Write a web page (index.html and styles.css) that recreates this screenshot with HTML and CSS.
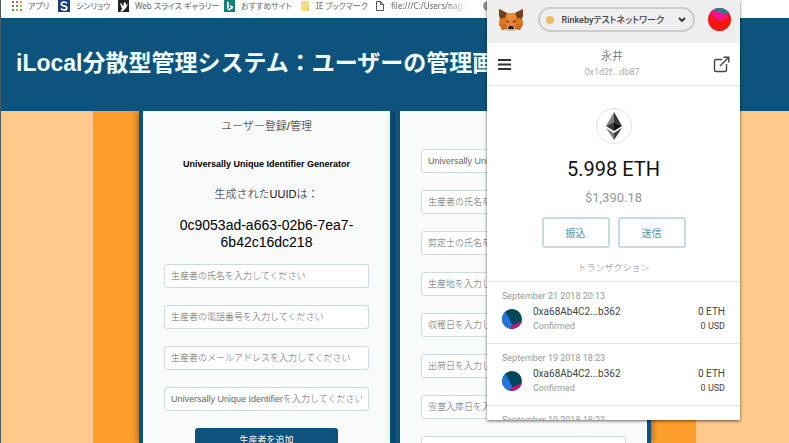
FILE: index.html
```html
<!DOCTYPE html>
<html lang="ja">
<head>
    <meta charset="UTF-8">
    <meta name="viewport" content="width=device-width, initial-scale=1.0">
    <title>iLocal分散型管理システム</title>
    <link rel="stylesheet" href="styles.css">
</head>
<body>

    <nav class="bookmarks">
        <a href="#">
            <svg width="10" height="10" viewBox="0 0 10 10"><path fill="#d9534f" d="M0 0h2v2H0zM4 0h2v2H4zM0 4h2v2H0z"/><path fill="#e0a030" d="M8 0h2v2H8zM8 4h2v2H8zM4 8h2v2H4z"/><path fill="#4a9a5a" d="M4 4h2v2H4zM0 8h2v2H0z"/><path fill="#c76a3a" d="M8 8h2v2H8z"/></svg>
            アプリ
        </a>
        <a href="#">
            <svg width="12" height="12" viewBox="0 0 12 12"><rect width="12" height="12" fill="#1c3f7c"/><path d="M9 3.2Q8 2 6 2 3.4 2 3.4 3.9 3.4 5.4 6 5.9 8.8 6.4 8.8 8 8.8 10 6 10 4 10 3 8.6" fill="none" stroke="#fff" stroke-width="1.7"/></svg>
            シンリョウ
        </a>
        <a href="#">
            <svg width="11" height="12" viewBox="0 0 11 12"><rect width="11" height="12" fill="#222"/><path d="M2 3l2 1 1 3 1-5 2 1v2l2-1-2 4-3 3-3 1 2-3z" fill="#fff"/></svg>
            Web スライス ギャラリー
        </a>
        <a href="#">
            <svg width="11" height="12" viewBox="0 0 11 12"><rect width="11" height="12" fill="#138276"/><path d="M3 1.5l1.7.6v5.7L3 9.3zM3 9.3l2 1.3L9 8.2V6.3L5.4 5l.8 1.7 1 .5-2.5 1.5z" fill="#fff"/></svg>
            おすすめサイト
        </a>
        <a href="#">
            <svg width="10" height="12" viewBox="0 0 10 12"><path d="M1 1h7l1 1v9H1z" fill="#f7dc83"/><path d="M7 7h2v4H7z" fill="#efca62"/></svg>
            IE ブックマーク
        </a>
        <a href="#">
            <svg width="10" height="12" viewBox="0 0 10 12"><path d="M1.5 1.5h4l3 3v6h-7zM5.5 1.5v3h3" fill="none" stroke="#555"/></svg>
            <span class="fade">file:///C:/Users/naga</span>
        </a>
        <a href="#"><svg width="10" height="12" viewBox="0 0 10 12"><circle cx="5" cy="6" r="5" fill="#9a9488"/></svg></a>
    </nav>

    <header class="site-header">
        <h1>iLocal分散型管理システム：ユーザーの管理画面</h1>
    </header>

    <main class="container">
        <section class="panel">
            <h2>ユーザー登録/管理</h2>
            <h3>Universally Unique Identifier Generator</h3>
            <p class="uuid-label">生成されたUUIDは：</p>
            <p class="uuid">0c9053ad-a663-02b6-7ea7-6b42c16dc218</p>
            <form class="fields">
                <input type="text" aria-label="氏名" placeholder="生産者の氏名を入力してください">
                <input type="tel" aria-label="電話番号" placeholder="生産者の電話番号を入力してください">
                <input type="email" aria-label="メールアドレス" placeholder="生産者のメールアドレスを入力してください">
                <input type="text" aria-label="UUID" placeholder="Universally Unique Identifierを入力してください">
                <button type="button" class="btn-add">生産者を追加</button>
            </form>
        </section>

        <section class="panel panel-right">
            <form class="fields">
                <input type="text" aria-label="UUID" placeholder="Universally Unique Identifierを入力してください">
                <input type="text" aria-label="生産者" placeholder="生産者の氏名を入力してください">
                <input type="text" aria-label="剪定士" placeholder="剪定士の氏名を入力してください">
                <input type="text" aria-label="生産地" placeholder="生産地を入力してください">
                <input type="text" aria-label="収穫日" placeholder="収穫日を入力してください">
                <input type="text" aria-label="出荷日" placeholder="出荷日を入力してください">
                <input type="text" aria-label="雪室入庫日" placeholder="雪室入庫日を入力してください">
                <input type="text" aria-label="雪室出庫日" placeholder="雪室出庫日を入力してください">
            </form>
        </section>
    </main>

    <!-- wallet popup -->
    <aside class="wallet">
        <div class="wallet-top">
            <svg width="26" height="24" viewBox="0 0 26 24">
                <path d="M1 1l8 4h8l8-4-1 9 1 6-3 6-5-1-2 2h-4l-2-2-5 1-3-6 1-6z" fill="#e8822a"/>
                <path d="M1 1l8 4-2 5-5 1-1-4zM25 1l-8 4 2 5 5 1 1-4z" fill="#763e1a"/>
                <path d="M9 5h8l1 7-5 2-5-2z" fill="#f08a30"/>
                <path d="M2 11l6-1 2 5-9 1zM24 11l-6-1-2 5 9 1z" fill="#e2761b"/>
                <path d="M1 16h7l2 5-6 1zM25 16h-7l-2 5 6 1z" fill="#cf6a20"/>
                <path d="M7 12l4 1v2zM19 12l-4 1v2z" fill="#4a2c1a"/>
                <path d="M10 18h6l1 3-2 2h-4l-2-2z" fill="#c9b5a5"/>
                <path d="M11 18h4l1 3h-6z" fill="#221a18"/>
            </svg>
            <label class="network">
                <span class="dot"></span>
                <select aria-label="ネットワーク">
                    <option>Rinkebyテストネットワーク</option>
                </select>
                <svg width="8" height="6" viewBox="0 0 8 6"><path d="M1 1l3 3 3-3" fill="none" stroke="#333" stroke-width="1.8"/></svg>
            </label>
            <svg width="23" height="23" viewBox="0 0 23 23">
                <clipPath id="face"><circle cx="11.5" cy="11.5" r="11.5"/></clipPath>
                <g clip-path="url(#face)"><path fill="#f5140e" d="M0 0h23v23H0z"/><path fill="#f0158a" d="M4 1l17 4-2 5-8 3-9-7z"/><path fill="#2a7d92" d="M5 0h14l4 6-9-1-7-2z"/></g>
            </svg>
        </div>

        <div class="account">
            <button type="button" class="icon-btn" aria-label="メニュー">
                <svg width="13" height="11" viewBox="0 0 13 11"><path d="M0 1h13M0 5.5h13M0 10h13" stroke="#333" stroke-width="1.8"/></svg>
            </button>
            <div class="account-name">
                <strong>永井</strong>
                <span>0x1d2f...db87</span>
            </div>
            <button type="button" class="icon-btn" aria-label="開く">
                <svg width="17" height="17" viewBox="0 0 17 17"><path d="M9 3.5H3Q1.5 3.5 1.5 5v9Q1.5 15.5 3 15.5h9q1.5 0 1.5-1.5V8M7 10l8.500-8.500M10.500 1.200h5.300v5.300" fill="none" stroke="#444" stroke-width="1.4"/></svg>
            </button>
        </div>

        <div class="balance">
            <div class="eth">
                <svg width="18" height="28" viewBox="0 0 18 28"><path d="M9 0L1 14l8-4z" fill="#828384"/><path d="M9 0l8 14-8-4z" fill="#343434"/><path d="M1 14l8-4v9z" fill="#3a3a3a"/><path d="M17 14l-8-4v9z" fill="#141414"/><path d="M1 16l8 5v7z" fill="#828384"/><path d="M17 16l-8 5v7z" fill="#3a3a3b"/></svg>
            </div>
            <p class="amount">5.998 ETH</p>
            <p class="usd">$1,390.18</p>
            <div class="actions">
                <button type="button">振込</button>
                <button type="button">送信</button>
            </div>
        </div>

        <h4>トランザクション</h4>
        <ul class="tx-list">
            <li>
                <time>September 21 2018 20:13</time>
                <div class="tx">
                    <svg width="20" height="20" viewBox="0 0 20 20"><clipPath id="tx1"><circle cx="10" cy="10" r="10"/></clipPath><g clip-path="url(#tx1)"><path fill="#03495e" d="M0 0h20v20H0z"/><path fill="#2374e1" d="M0 2h3l8 15-2 4H0z"/><path fill="#c2187c" d="M9 17l11-5v8H8z"/></g></svg>
                    <div class="tx-info">
                        <b>0xa68Ab4C2...b362</b>
                        <span>Confirmed</span>
                    </div>
                    <div class="tx-value">
                        <b>0 ETH</b>
                        <span>0 USD</span>
                    </div>
                </div>
            </li>
            <li>
                <time>September 19 2018 18:23</time>
                <div class="tx">
                    <svg width="20" height="20" viewBox="0 0 20 20"><clipPath id="tx2"><circle cx="10" cy="10" r="10"/></clipPath><g clip-path="url(#tx2)"><path fill="#03495e" d="M0 0h20v20H0z"/><path fill="#2374e1" d="M0 2h3l8 15-2 4H0z"/><path fill="#c2187c" d="M9 17l11-5v8H8z"/></g></svg>
                    <div class="tx-info">
                        <b>0xa68Ab4C2...b362</b>
                        <span>Confirmed</span>
                    </div>
                    <div class="tx-value">
                        <b>0 ETH</b>
                        <span>0 USD</span>
                    </div>
                </div>
            </li>
            <li>
                <time>September 19 2018 18:23</time>
            </li>
        </ul>
    </aside>

</body>
</html>
```
FILE: styles.css
```css
* {
    box-sizing: border-box;
    margin: 0;
    padding: 0;
}

body {
    position: relative;
    display: flex;
    flex-direction: column;
    height: 100vh;
    overflow: hidden;
    border-left: 1px solid #4a5a62;
    background-color: #fec98b;
    font-family: "Liberation Sans", "Noto Sans CJK JP", sans-serif;
}

input, button, select {
    font-family: inherit;
}

/* bookmarks bar */
.bookmarks {
    display: grid;
    grid-template-columns: 46px 60px 106px 76px 75px 108px 20px;
    flex: none;
    height: 18px;
    padding: 0 0 7px 11px;
    background-color: #fff;
    overflow: hidden;
}

.bookmarks a {
    display: flex;
    align-items: center;
    gap: 6px;
    color: #666;
    font: 8px/12px "Noto Sans", "Noto Sans CJK JP", sans-serif;
    font-feature-settings: "palt";
    text-decoration: none;
    white-space: nowrap;
}

.bookmarks svg {
    flex: none;
}

.fade {
    -webkit-mask-image: linear-gradient(to right, #000 75%, transparent);
    mask-image: linear-gradient(to right, #000 75%, transparent);
}

.site-header {
    flex: none;
    padding: 28px 15px 31px;
    background-color: #0d537d;
}

.site-header h1 {
    color: #f0feff;
    font-size: 23px;
    line-height: 34px;
    white-space: nowrap;
}

/* main area */
.container {
    display: flex;
    flex: 1;
    min-height: 0;
    margin: 0 93px 0 92px;
    padding: 0 45px 0 46px;
    background-color: #fe9f2d;
    overflow: hidden;
}

.panel {
    flex: 1;
    min-width: 0;
    padding: 7px 21px;
    border: solid #0d537d;
    border-width: 0 5px 0 4px;
    background-color: #f9fafa;
    box-shadow: 0 0 8px rgba(0, 0, 0, 0.5);
    text-align: center;
}

.panel-right {
    padding-top: 38px;
    border-width: 0 4px 0 5px;
}

.panel h2 {
    color: #222;
    font-size: 11px;
    font-weight: 300;
    line-height: 16px;
}

.panel h3 {
    margin-top: 22px;
    font-size: 9px;
    line-height: 16px;
}

.uuid-label {
    margin-top: 14px;
    color: #111;
    font-size: 11px;
    font-weight: 300;
    line-height: 16px;
}

.uuid {
    margin: 15px 0 13px;
    font-size: 14px;
    line-height: 17px;
}

.fields {
    display: flex;
    flex-direction: column;
    gap: 17px;
}

.fields input {
    width: 100%;
    height: 24px;
    padding: 0 6px;
    border: 1px solid #c9dcdf;
    border-radius: 3px;
    background-color: #fff;
    font-size: 9px;
    font-weight: 300;
}

.fields input::placeholder {
    color: #666;
}

.btn-add {
    align-self: center;
    width: 70%;
    height: 24px;
    border: 0;
    border-radius: 3px;
    background-color: #0d537d;
    color: #fff;
    font-size: 9px;
    line-height: 16px;
}

/* wallet popup */
.wallet {
    position: absolute;
    top: 0;
    right: 49px;
    bottom: 23px;
    width: 253px;
    overflow: hidden;
    background-color: #fff;
    box-shadow: 0 1px 3px rgba(0, 0, 0, 0.6);
    color: #444;
    font-family: Roboto, "Noto Sans CJK JP", sans-serif;
    font-size: 9px;
}

.wallet-top {
    display: flex;
    align-items: center;
    justify-content: space-between;
    height: 43px;
    padding: 0 9px 4px 11px;
    background-color: #eee;
}

.network {
    display: flex;
    align-items: center;
    gap: 8px;
    height: 25px;
    padding: 0 7px 0 6px;
    border: 2px solid #ccc;
    border-radius: 13px;
}

.dot {
    width: 8px;
    height: 8px;
    border-radius: 50%;
    background-color: #ecbc68;
}

.network select {
    width: 108px;
    border: 0;
    appearance: none;
    background: none;
    color: #444;
    font-size: 9px;
    font-weight: 500;
    font-feature-settings: "palt";
}

.account {
    display: flex;
    align-items: center;
    justify-content: space-between;
    height: 43px;
    padding: 0 10px 0 11px;
    border-bottom: 1px solid #e8e8e8;
}

.icon-btn {
    display: flex;
    border: 0;
    background: none;
}

.account-name {
    display: flex;
    flex-direction: column;
    text-align: center;
}

.account-name strong {
    font-size: 11px;
    font-weight: 300;
    line-height: 16px;
}

.account-name span {
    color: #aaa;
    line-height: 14px;
}

.balance {
    display: flex;
    flex-direction: column;
    align-items: center;
    padding-top: 22px;
}

.eth {
    display: flex;
    align-items: center;
    justify-content: center;
    width: 36px;
    height: 36px;
    border: 1px solid #e3e3e3;
    border-radius: 50%;
}

.amount {
    margin-top: 13px;
    color: #111;
    font-size: 20px;
    line-height: 24px;
}

.usd {
    margin-top: 9px;
    color: #999;
    font-size: 13px;
    line-height: 16px;
}

.actions {
    display: flex;
    gap: 8px;
    margin-top: 11px;
}

.actions button {
    width: 68px;
    height: 31px;
    border: 2px solid #c3dbe3;
    border-radius: 3px;
    background-color: #fff;
    color: #4a93ae;
    font-size: 10px;
}

.wallet h4 {
    margin-top: 13px;
    padding-bottom: 5px;
    border-bottom: 1px solid #e8e8e8;
    color: #888;
    font-size: 9px;
    font-weight: 300;
    line-height: 15px;
    text-align: center;
}

.tx-list {
    list-style: none;
}

.tx-list li {
    padding: 8px 15px 10px;
    border-bottom: 1px solid #e8e8e8;
}

.tx-list time {
    display: block;
    color: #999;
    line-height: 12px;
}

.tx {
    display: flex;
    align-items: center;
    gap: 11px;
    margin-top: 3px;
}

.tx-info, .tx-value {
    display: flex;
    flex-direction: column;
}

.tx-value {
    margin-left: auto;
    text-align: right;
}

.tx b {
    font-size: 10px;
    font-weight: normal;
    line-height: 14px;
}

.tx span {
    line-height: 14px;
}

.tx-info span {
    color: #999;
}
```
